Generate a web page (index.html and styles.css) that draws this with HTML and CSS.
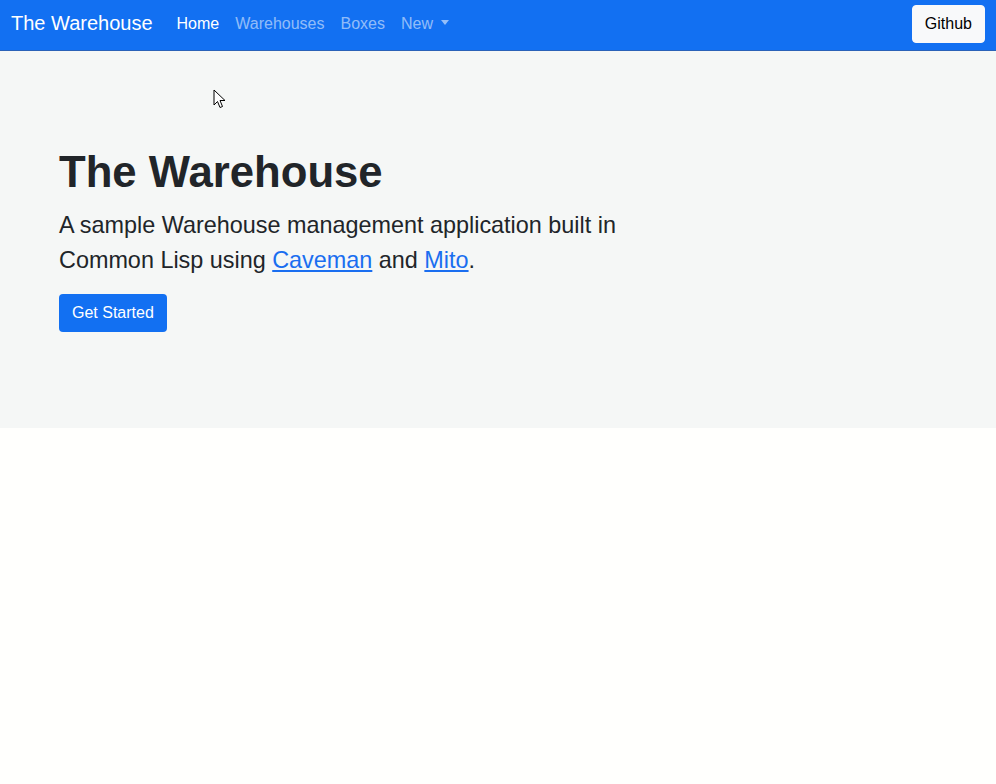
FILE: index.html
```html
<!DOCTYPE html>
<html lang="en">
<head>
<meta charset="utf-8">
<title>The Warehouse</title>
<link rel="stylesheet" href="styles.css">
</head>
<body>
<nav class="navbar">
  <div class="navbar-inner">
    <a class="brand" href="#">The Warehouse</a>
    <ul class="nav">
      <li><a class="nav-link active" href="#">Home</a></li>
      <li><a class="nav-link" href="#">Warehouses</a></li>
      <li><a class="nav-link" href="#">Boxes</a></li>
      <li><a class="nav-link dropdown" href="#">New</a></li>
    </ul>
    <a class="btn-light" href="#">Github</a>
  </div>
</nav>
<main>
  <section class="hero">
    <div class="hero-inner">
      <h1 class="hero-title">The Warehouse</h1>
      <p class="lead">A sample Warehouse management application built in Common Lisp using <a href="#">Caveman</a> and <a href="#">Mito</a>.</p>
      <a class="btn-primary" href="#">Get Started</a>
    </div>
  </section>
</main>
<svg class="cursor" width="14" height="20" viewBox="0 0 14 20" aria-hidden="true">
  <path d="M1 1 L1 16 L4.5 12.5 L7 18.5 L9.5 17.5 L7 11.5 L12 11.5 Z" fill="#fff" stroke="#000" stroke-width="1" stroke-linejoin="miter"/>
</svg>
</body>
</html>
```

FILE: styles.css
```css
* { box-sizing: border-box; }
html, body { margin: 0; padding: 0; }
body {
  font-family: "Liberation Sans", Arial, sans-serif;
  font-size: 16px;
  line-height: 1.5;
  color: #212529;
  background: #fffffd;
  min-height: 784px;
}
a { color: #0d6efd; }

.navbar {
  background: #1270f2;
  padding: 5px 0 8px;
  border-bottom: 1px solid #2a62b8;
  height: 51px;
}
.navbar-inner {
  display: flex;
  align-items: center;
  padding: 0 11px 0 11px;
  height: 37px;
}
.brand {
  font-size: 20px;
  color: #fff;
  text-decoration: none;
  margin-right: 16px;
  line-height: 30px;
  padding-bottom: 2px;
}
.nav {
  list-style: none;
  display: flex;
  margin: 0;
  padding: 0;
  flex: 1;
}
.nav-link {
  display: block;
  padding: 9px 8px;
  color: rgba(255,255,255,.55);
  text-decoration: none;
  line-height: 24px;
}
.nav-link.active { color: #fff; }
.dropdown::after {
  content: "";
  display: inline-block;
  margin-left: 8px;
  vertical-align: 4px;
  border-top: 5px solid rgba(255,255,255,.55);
  border-left: 4px solid transparent;
  border-right: 4px solid transparent;
}
.btn-light {
  display: inline-block;
  background: #f8f9fa;
  color: #000;
  text-decoration: none;
  border: 1px solid #f8f9fa;
  border-radius: 4px;
  padding: 6px 12px;
  line-height: 24px;
  font-size: 16px;
}

.hero {
  background: #f5f7f6;
  padding: 48px;
  margin-bottom: 24px;
}
.hero-inner {
  padding: 47px 11px 48px;
}
.hero-title {
  font-size: 43.7px;
  font-weight: 700;
  line-height: 1.2;
  margin: 0 0 10px;
}
.lead {
  font-size: 23.4px;
  line-height: 35px;
  width: 584px;
  margin: 0 0 16px;
}
.lead a { color: #1a6ef0; }
.btn-primary {
  display: inline-block;
  background: #1270f2;
  color: #fff;
  text-decoration: none;
  border-radius: 4px;
  padding: 7px 13px;
  line-height: 24px;
  font-size: 16px;
}

.cursor {
  position: absolute;
  left: 213px;
  top: 89px;
}
```
